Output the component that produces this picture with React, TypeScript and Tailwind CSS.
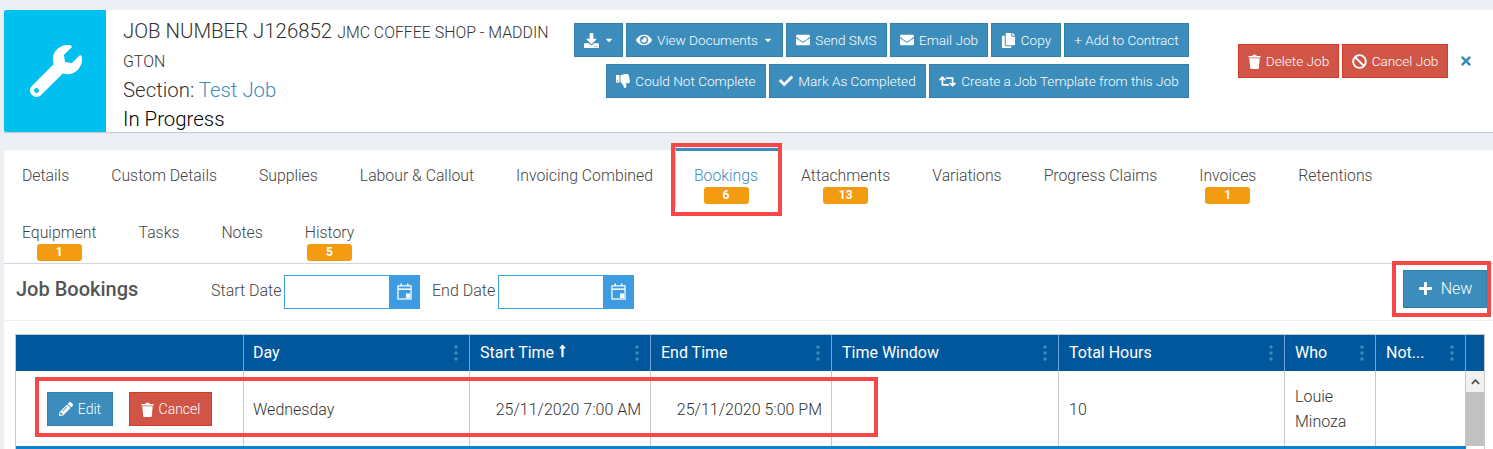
import React from "react";
import { FaDownload, FaEye, FaEnvelope, FaCopy, FaThumbsDown, FaCheck, FaRetweet, FaBan, FaTimes, FaPlus, FaPencilAlt, FaWrench, FaCaretDown, FaLongArrowAltUp } from "react-icons/fa";

const Trash = ({ className = "" }: { className?: string }) => (
  <svg viewBox="0 0 14 16" className={className} fill="currentColor">
    <path d="M0.5 2.2 H4.6 L5.2 0.6 H8.8 L9.4 2.2 H13.5 V3.8 H0.5 Z" />
    <path d="M1.4 4.6 H12.6 L11.6 15.2 Q11.5 16 10.7 16 H3.3 Q2.5 16 2.4 15.2 Z" />
  </svg>
);

const Cal = () => (
  <svg viewBox="0 0 16 18" className="w-[15px] h-[17px]" fill="none" stroke="white">
    <rect x="1" y="3" width="14" height="14" strokeWidth="1.3" />
    <path d="M1 6.5 H15" strokeWidth="1.6" />
    <path d="M4.5 0.5 V3 M11.5 0.5 V3" strokeWidth="1.6" />
    <rect x="9.5" y="11" width="4.5" height="5" fill="white" stroke="none" />
  </svg>
);

const Btn = ({ w, children, red }: { w: string; children: React.ReactNode; red?: boolean }) => (
  <div className={`${w} h-[34px] flex items-center justify-center gap-[5px] text-white text-[13.6px] font-light border shrink-0 ${red ? "bg-[#d15546] border-[#d73925]" : "bg-[#3c8dbc] border-[#367fa9]"}`}>
    {children}
  </div>
);

const Badge = ({ n }: { n: string }) => (
  <div className="w-[45px] h-[17px] rounded-[3px] bg-[#f39c12] text-white text-[12px] font-bold leading-[17px] text-center -mt-[1px]">{n}</div>
);

const Tab = ({ label, n, active }: { label: string; n?: string; active?: boolean }) => (
  <div className={`shrink-0 flex flex-col items-center ${active ? "h-[59px] pt-[13px] pl-[18px] pr-[20px] border-t-[3px] border-x border-t-[#3c8dbc] border-x-[#d2d6de] -mt-[2px] bg-white" : "pt-[14px] px-[20px]"}`}>
    <div className={`text-[15.8px] font-light leading-[24px] whitespace-nowrap ${active ? "text-[#3c8dbc]" : "text-[#444]"}`}>{label}</div>
    {n && <Badge n={n} />}
  </div>
);

const Dots = () => (
  <svg viewBox="0 0 4 16" className="w-[4px] h-[16px] absolute right-[11px] top-[10px]" fill="#3c8dbc">
    <circle cx="2" cy="2" r="1.7" /><circle cx="2" cy="8" r="1.7" /><circle cx="2" cy="14" r="1.7" />
  </svg>
);

const Head = ({ w, children, dots = true, cls = "pl-[10px]" }: { w: string; children?: React.ReactNode; dots?: boolean; cls?: string }) => (
  <div className={`${w} relative h-full shrink-0 border-r border-[#6fa3d8] ${cls} flex items-center text-white text-[16px] font-normal`}>
    {children}
    {dots && <Dots />}
  </div>
);

const Cell = ({ w, children, cls = "" }: { w: string; children?: React.ReactNode; cls?: string }) => (
  <div className={`${w} h-full shrink-0 border-r border-[#c6c6c6] flex items-center text-[16px] font-light text-[#333] ${cls}`}>{children}</div>
);

const Note = ({ cls }: { cls: string }) => <div className={`absolute border-[4px] border-[#f94646] pointer-events-none ${cls}`} />;

export default function App() {
  return (
    <div className="relative w-[1493px] h-[449px] overflow-hidden bg-[#ecf0f5] font-['Roboto',sans-serif] pt-[10px] pl-[4px]">
      <div className="h-[122px] bg-white flex shadow-[0_1px_1px_rgba(0,0,0,0.15)]">
        <div className="w-[102px] h-full bg-[#00c0ef] rounded-l-[2px] flex items-center justify-center text-white shrink-0">
          <FaWrench className="w-[52px] h-[52px] ml-[1px]" />
        </div>
        <div className="w-[431px] ml-[17px] shrink-0 pt-[7px] font-light text-[#333]">
          <div className="leading-[29px] whitespace-nowrap"><span className="text-[20.4px]">JOB NUMBER J126852 </span><span className="text-[15.9px]">JMC COFFEE SHOP - MADDIN</span></div>
          <div className="leading-[29px] text-[15.9px]">GTON</div>
          <div className="text-[20.4px] leading-[28px]">Section: <span className="text-[#3c8dbc]">Test Job</span></div>
          <div className="text-[20.4px] leading-[30px] text-black">In Progress</div>
        </div>
        <div className="w-[615px] ml-[20px] pt-[13px] flex flex-col gap-[7px] shrink-0">
          <div className="flex gap-[3px]">
            <Btn w="w-[49px]"><FaDownload className="w-[15px] h-[15px]" /><FaCaretDown className="w-[10px] h-[10px]" /></Btn>
            <Btn w="w-[157px]"><FaEye className="w-[16px] h-[16px]" />View Documents<FaCaretDown className="w-[10px] h-[10px]" /></Btn>
            <Btn w="w-[101px]"><FaEnvelope className="w-[14px] h-[14px]" />Send SMS</Btn>
            <Btn w="w-[98px]"><FaEnvelope className="w-[14px] h-[14px]" />Email Job</Btn>
            <Btn w="w-[70px]"><FaCopy className="w-[15px] h-[15px]" />Copy</Btn>
            <Btn w="w-[125px]">+ Add to Contract</Btn>
          </div>
          <div className="flex gap-[3px] justify-end">
            <Btn w="w-[160px]"><FaThumbsDown className="w-[14px] h-[14px]" />Could Not Complete</Btn>
            <Btn w="w-[157px]"><FaCheck className="w-[14px] h-[14px]" />Mark As Completed</Btn>
            <Btn w="w-[260px]"><FaRetweet className="w-[17px] h-[17px]" />Create a Job Template from this Job</Btn>
          </div>
        </div>
        <div className="ml-[49px] pt-[34px] flex gap-[3px] shrink-0">
          <Btn w="w-[101px]" red><Trash className="w-[13px] h-[15px]" />Delete Job</Btn>
          <Btn w="w-[106px]" red><FaBan className="w-[15px] h-[15px]" />Cancel Job</Btn>
        </div>
        <div className="ml-[12px] pt-[44px] text-[#3c8dbc]"><FaTimes className="w-[12px] h-[14px]" /></div>
      </div>

      <div className="mt-[18px] bg-white rounded-tl-[3px] h-[300px]">
        <div className="h-[114px] border-b border-[#d2d6de]">
          <div className="flex gap-[2px] -ml-[2px]">
            <Tab label="Details" />
            <Tab label="Custom Details" />
            <Tab label="Supplies" />
            <Tab label="Labour & Callout" />
            <Tab label="Invoicing Combined" />
            <Tab label="Bookings" n="6" active />
            <Tab label="Attachments" n="13" />
            <Tab label="Variations" />
            <Tab label="Progress Claims" />
            <Tab label="Invoices" n="1" />
            <Tab label="Retentions" />
          </div>
          <div className="flex gap-[2px] -ml-[2px]">
            <Tab label="Equipment" n="1" />
            <Tab label="Tasks" />
            <Tab label="Notes" />
            <Tab label="History" n="5" />
          </div>
        </div>

        <div className="h-[57px] border-b border-[#f0f0f0] flex items-center pl-[12px] pr-[6px]">
          <div className="w-[195px] text-[20px] font-medium text-[#555] shrink-0 -mt-[7px]">Job Bookings</div>
          <div className="text-[16px] font-light text-[#444] shrink-0 w-[73px] -mt-[3px]">Start Date</div>
          <div className="flex w-[136px] h-[34px] border border-[#3c9cdf] shrink-0 -mt-[1px]">
            <div className="flex-1" />
            <div className="w-[30px] bg-[#3c9cdf] flex items-center justify-center"><Cal /></div>
          </div>
          <div className="ml-[12px] text-[16px] font-light text-[#444] w-[66px] shrink-0 -mt-[3px]">End Date</div>
          <div className="flex w-[136px] h-[34px] border border-[#3c9cdf] shrink-0 -mt-[1px]">
            <div className="flex-1" />
            <div className="w-[30px] bg-[#3c9cdf] flex items-center justify-center"><Cal /></div>
          </div>
          <div className="ml-auto w-[84px] h-[38px] bg-[#3c8dbc] border border-[#367fa9] flex items-center justify-center gap-[8px] text-white text-[16px] font-light -mt-[7px]">
            <FaPlus className="w-[15px] h-[15px]" />New
          </div>
        </div>

        <div className="mt-[13px] ml-[11px] w-[1470px] h-[115px] border-x border-t border-[#c6c6c6] relative">
          <div className="h-[36px] bg-[#01579b] flex">
            <Head w="w-[228px]" dots={false} />
            <Head w="w-[226px]" cls="pl-[9px]">Day</Head>
            <Head w="w-[181px]">Start Time<FaLongArrowAltUp className="w-[9px] h-[14px] ml-[4px] -mt-[5px]" /></Head>
            <Head w="w-[181px]">End Time</Head>
            <Head w="w-[227px]">Time Window</Head>
            <Head w="w-[226px]">Total Hours</Head>
            <Head w="w-[91px]">Who</Head>
            <Head w="w-[90px]">Not...</Head>
          </div>
          <div className="h-[75px] flex">
            <Cell w="w-[228px]" cls="pl-[31px] gap-[16px] pt-[1px]">
              <div className="w-[66px] h-[34px] bg-[#3c8dbc] border border-[#367fa9] flex items-center justify-center gap-[5px] text-white text-[14px] font-light">
                <FaPencilAlt className="w-[14px] h-[14px]" />Edit
              </div>
              <div className="w-[83px] h-[34px] bg-[#d15546] border border-[#d73925] flex items-center justify-center gap-[5px] text-white text-[14px] font-light">
                <Trash className="w-[13px] h-[15px]" />Cancel
              </div>
            </Cell>
            <Cell w="w-[226px]" cls="pl-[9px] pt-[2px]">Wednesday</Cell>
            <Cell w="w-[181px]" cls="justify-end pr-[9px] pt-[2px]">25/11/2020 7:00 AM</Cell>
            <Cell w="w-[181px]" cls="justify-end pr-[9px] pt-[2px]">25/11/2020 5:00 PM</Cell>
            <Cell w="w-[227px]" />
            <Cell w="w-[226px]" cls="pl-[10px] pt-[2px]">10</Cell>
            <Cell w="w-[91px]" cls="pl-[10px] leading-[25px]">Louie<br />Minoza</Cell>
            <Cell w="w-[90px]" />
            <div className="w-[19px] h-full bg-[#f1f1f1] flex flex-col">
              <div className="h-[21px] flex items-center justify-center">
                <svg viewBox="0 0 10 6" className="w-[9px] h-[6px]" fill="none" stroke="#505050" strokeWidth="2"><path d="M1 5 L5 1 L9 5" /></svg>
              </div>
              <div className="flex-1 bg-[#c1c1c1]" />
            </div>
          </div>
          <div className="h-[3px] w-[1450px] bg-[#0b82cf]" />
        </div>
      </div>

      <Note cls="left-[671px] top-[143px] w-[111px] h-[73px]" />
      <Note cls="left-[1392px] top-[261px] w-[99px] h-[56px]" />
      <Note cls="left-[35px] top-[377px] w-[843px] h-[60px]" />
    </div>
  );
}
